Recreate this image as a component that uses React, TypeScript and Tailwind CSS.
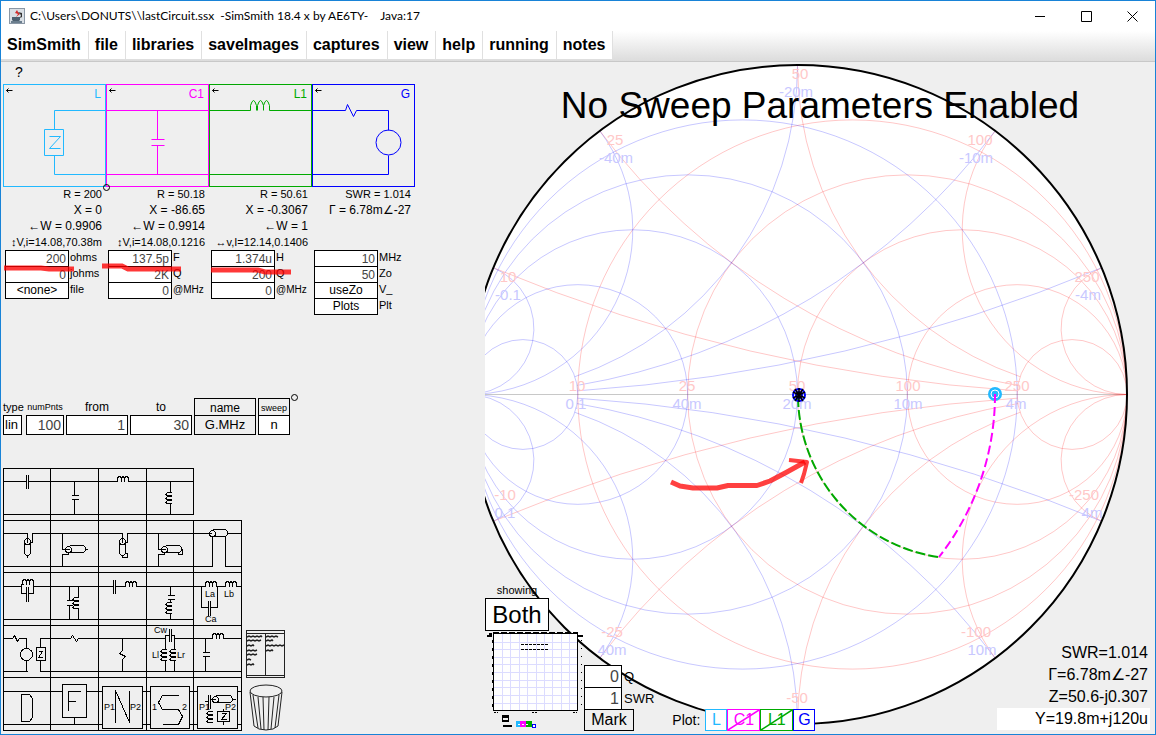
import { useState } from 'react';
import type { ReactNode } from 'react';

const MENUS = ['SimSmith', 'file', 'libraries', 'saveImages', 'captures', 'view', 'help', 'running', 'notes'];

type Field = { label: string; value: string; kind?: 'button' };

type Element = {
  name: string;
  color: string;
  stats: string[];
  fields: Field[];
  drawing: ReactNode;
};

const ELEMENTS: Element[] = [
  {
    name: 'L',
    color: 'text-[#22b9ff]',
    stats: ['R = 200', 'X = 0', '←W = 0.9906', '↕V,i=14.08,70.38m'],
    fields: [
      { label: 'ohms', value: '200' },
      { label: 'johms', value: '0' },
      { label: 'file', value: '<none>', kind: 'button' },
    ],
    drawing: <path d="M103 26H51V45M41 45H60V71H41ZM51 71V90H103M46 52H57L46 64H57" />,
  },
  {
    name: 'C1',
    color: 'text-[#ff00ff]',
    stats: ['R = 50.18', 'X = -86.65', '←W = 0.9914', '↕V,i=14.08,0.1216'],
    fields: [
      { label: 'F', value: '137.5p' },
      { label: 'Q', value: '2K' },
      { label: '@MHz', value: '0' },
    ],
    drawing: <path d="M0 26H103M51 26V55M45 55H58M45 61H58M51 61V90M0 90H103" />,
  },
  {
    name: 'L1',
    color: 'text-[#00aa00]',
    stats: ['R = 50.61', 'X = -0.3067', '←W = 1', '↔v,I=12.14,0.1406'],
    fields: [
      { label: 'H', value: '1.374u' },
      { label: 'Q', value: '200' },
      { label: '@MHz', value: '0' },
    ],
    drawing: (
      <path d="M0 26H41V21Q44 11 47 21V26M48 26V21Q51 11 54 21V26M54 21Q57 11 60 21V26H103M0 90H103" />
    ),
  },
  {
    name: 'G',
    color: 'text-[#0000ff]',
    stats: ['SWR = 1.014', 'Γ = 6.78m∠-27'],
    fields: [
      { label: 'MHz', value: '10' },
      { label: 'Zo', value: '50' },
      { label: 'V_', value: 'useZo', kind: 'button' },
      { label: 'Plt', value: 'Plots', kind: 'button' },
    ],
    drawing: (
      <>
        <path d="M0 26H33L35 20L41 32L44 26H76V46M76 71V90H0" />
        <circle cx="76" cy="58" r="12.5" />
      </>
    ),
  },
];

// Palette symbols, drawn from the top-left corner of each tile
const COIL = (x: number, y: number) =>
  `M${x} ${y}V${y - 3}L${x + 1} ${y - 5}H${x + 3}L${x + 4} ${y - 3}V${y}M${x + 4} ${y - 3}L${x + 5} ${y - 5}H${x + 6}L${x + 7} ${y - 3}V${y}M${x + 7} ${y - 3}L${x + 8} ${y - 5}H${x + 10}L${x + 11} ${y - 3}V${y}`;

const COIL_DOWN = (x: number, y: number) =>
  `M${x + 1} ${y}H${x - 3}L${x - 5} ${y + 2}L${x - 3} ${y + 3}H${x + 1}M${x + 1} ${y + 4}H${x - 3}L${x - 5} ${y + 6}L${x - 3} ${y + 7}H${x + 1}M${x + 1} ${y + 8}H${x - 3}L${x - 5} ${y + 10}L${x - 3} ${y + 11}H${x + 1}`;

type Tile = { title: string; d: string; texts?: [string, number, number][]; extra?: ReactNode };

const ROWS: { height: string; h: number; right: number; tiles: Tile[] }[] = [
  {
    height: 'h-[52px]',
    h: 52,
    right: 46,
    tiles: [
      { title: 'Series C', d: 'M0 13H23M25 13H47M23 6V20M25 6V20M0 46H48' },
      { title: 'Shunt C', d: 'M0 13H48M24 13V27M21 27H28M21 31H28M24 31V46M0 46H48' },
      { title: 'Series L', d: 'M0 13H19M30 13H48M0 46H48' + COIL(19, 13) },
      { title: 'Shunt L', d: 'M0 13H47M24 13V24M24 35V46M0 46H47' + COIL_DOWN(24, 24) },
    ],
  },
  {
    height: 'h-[52px]',
    h: 52,
    right: 52,
    tiles: [
      {
        title: 'Series open stub',
        d: 'M0 13H24V22M47 13H29V22H27M21 22V33L23 35H25L27 33V22M24 35V37M0 46H47',
        extra: <circle cx="24" cy="21" r="3" />,
      },
      {
        title: 'Shunt open stub',
        d: 'M0 13H48M12 13V29H19M19 25H33L35 27V30L33 32H19M35 29H37M18 32V34H12V46M0 46H48',
        extra: <circle cx="18" cy="29" r="3" />,
      },
      {
        title: 'Series shorted stub',
        d: 'M0 13H24V22M48 13H29V22H27M21 22V33L23 35H25L27 33V22M24 35V37H29V33H27M0 46H48',
        extra: <circle cx="24" cy="21" r="3" />,
      },
      {
        title: 'Shunt shorted stub',
        d: 'M0 13H47M12 13V29H19M19 25H33L35 27V30L33 32H19M35 29H36V34H32V32M18 32V34H12V46M0 46H47',
        extra: <circle cx="18" cy="29" r="3" />,
      },
      {
        title: 'Transmission line',
        d: 'M0 13H18M19 9H32L34 11V14L32 16H19M34 13H48M0 46H19V16M32 16V46H48',
        extra: <circle cx="19" cy="13" r="3" />,
      },
    ],
  },
  {
    height: 'h-[53px]',
    h: 53,
    right: 53,
    tiles: [
      {
        title: 'Parallel LC trap',
        d: 'M0 14H18M30 14H47M20 12H18V21H23M29 12H30V21H25M23 14V29M25 14V29M0 47H47' + COIL(19, 12),
      },
      {
        title: 'Shunt parallel LC',
        d: 'M0 14H48M19 14V28M16 28H22M16 33H22M19 33V47M28 14V25H26M28 35V47M0 47H48' + COIL_DOWN(27, 25),
      },
      { title: 'Series LC', d: 'M0 14H15M15 7V21M17 7V21M17 14H27M38 14H48M0 47H48' + COIL(27, 14) },
      {
        title: 'Shunt series LC',
        d: 'M0 14H47M24 14V23M21 23H28M21 27H28M24 27V30M24 41V47M0 47H47' + COIL_DOWN(24, 30),
      },
      {
        title: 'Tapped LC',
        d: 'M0 14H12M23 14H32M43 14H48M8 14V35H15M24 14V35H17M15 28V43M17 28V43' + COIL(12, 14) + COIL(32, 14),
        texts: [['La', 12, 25], ['Lb', 31, 25], ['Ca', 12, 50]],
      },
    ],
  },
  {
    height: 'h-[52px]',
    h: 52,
    right: 52,
    tiles: [
      {
        title: 'Generator and load',
        d: 'M0 13H9L11 10L14 16L16 13H23V23M23 35V46M0 46H24M47 13H37V22M33 22H42V35H33ZM37 35V46H47M35 26H39L35 32H39',
        extra: <circle cx="23" cy="29" r="6" />,
      },
      { title: 'Series R', d: 'M0 13H20L22 10L26 16L28 13H48M0 46H48' },
      { title: 'Shunt R', d: 'M0 13H48M24 13V25L21 28L27 31L24 34V46M0 46H48' },
      {
        title: 'Coupled coils',
        d:
          'M0 13H19M19 46V35M19 24V10H23M23 3V16M25 3V16M25 10H28V24M28 35V46M28 13H47M0 46H47' +
          COIL_DOWN(19, 24) +
          COIL_DOWN(28, 24),
        texts: [['Cw', 8, 8], ['Ll', 6, 33], ['Lr', 31, 33]],
      },
      { title: 'L network', d: 'M0 13H19M30 13H48M12 13V27M9 27H16M9 31H16M12 31V46M0 46H48' + COIL(19, 13) },
    ],
  },
  {
    height: 'h-[54px]',
    h: 53,
    right: 53,
    tiles: [
      { title: 'D block', d: 'M0 14H47M0 47H47M18 17H26L29 21V40L26 44H18ZM0 53H48' },
      { title: 'F block', d: 'M0 14H12M36 14H48M12 7H36V40H12ZM24 40V47M0 47H48M30 14H18V33M18 24H25M0 53H48' },
      {
        title: 'N block',
        d: 'M0 14H4M44 14H48M4 9H44V51H4ZM0 47H4M44 47H48M17 45V13L31 45V13M0 53H48',
        texts: [['P1', 6, 33], ['P2', 32, 33]],
      },
      {
        title: 'S block',
        d: 'M0 14H4M43 14H47M4 9H43V51H4ZM0 47H4M43 47H47M32 18H16L12 25L16 32H32L36 39L32 47H16M0 53H48',
        texts: [['1', 6, 33], ['2', 36, 33]],
      },
      {
        title: 'Circuit block',
        d:
          'M0 14H4M44 14H48M4 9H44V51H4ZM0 47H4M44 47H48M11 24H15M15 17V31M17 17V31M17 22H22M22 18H37L39 21V23L37 25H22M39 22H42M24 34H36V44H24ZM30 31V34M30 44V47M28 36H33L28 42H33M0 53H48' +
          COIL_DOWN(18, 34),
        texts: [['P1', 6, 33], ['P2', 32, 33]],
        extra: <circle cx="22" cy="22" r="3" />,
      },
    ],
  },
];

// Smith chart geometry, in chart units
const CX = 797.5;
const CY = 394.5;
const R = 329.5;
const STEPS = [0.2, 0.5, 1, 2, 5];

function toPoint(r: number, x: number) {
  const den = (r + 1) * (r + 1) + x * x;
  const re = (r * r - 1 + x * x) / den;
  const im = (2 * x) / den;
  return `${(CX + R * re).toFixed(2)} ${(CY - R * im).toFixed(2)}`;
}

function reactanceArc(x: number) {
  const end = Math.abs(x) <= 1 ? toPoint(5, x) : `${CX + R} ${CY}`;
  const radius = R / Math.abs(x);
  return `M${toPoint(0, x)}A${radius} ${radius} 0 0 ${x > 0 ? 0 : 1} ${end}`;
}

const RED_LABELS: [string, number, number][] = [
  ['50', 800, 79], ['25', 615, 145], ['10', 508, 282], ['100', 980, 145], ['250', 1087, 282],
  ['10', 577, 391], ['25', 687, 391], ['50', 797, 391], ['100', 908, 391], ['250', 1017, 391],
  ['-10', 505, 500], ['-25', 612, 637], ['-50', 797, 703], ['-100', 976, 637], ['-250', 1084, 500],
];

const BLUE_LABELS: [string, number, number][] = [
  ['-20m', 796, 97], ['-40m', 616, 163], ['-0.1', 508, 300], ['-10m', 976, 163], ['-4m', 1088, 300],
  ['0.1', 576, 409], ['40m', 687, 409], ['20m', 797, 409], ['10m', 908, 409], ['4m', 1016, 409],
  ['0.1', 505, 518], ['40m', 612, 655], ['10m', 982, 655], ['4m', 1092, 518],
];

function Grid() {
  return (
    <>
      {STEPS.map(r => (
        <circle key={r} cx={CX + (R * r) / (1 + r)} cy={CY} r={R / (1 + r)} />
      ))}
      {STEPS.map(x => (
        <path key={x} d={reactanceArc(x) + reactanceArc(-x)} />
      ))}
    </>
  );
}

function SmithChart() {
  return (
    <svg viewBox="485 62 670 672" className="block w-full" fill="none" aria-label="Smith chart">
      <circle cx={CX} cy={CY} r={R} fill="#fff" />
      <path d="M485 394.5H1127" stroke="#c8c8c8" />
      <g stroke="#ff0000" strokeOpacity="0.22">
        <Grid />
      </g>
      <g stroke="#0000ff" strokeOpacity="0.22" transform={`translate(${CX * 2} 0) scale(-1 1)`}>
        <Grid />
      </g>
      <g className="text-[15px]" textAnchor="middle">
        {RED_LABELS.map(([text, x, y]) => (
          <text key={`${x}-${y}`} x={x} y={y} fill="#ffc8c8">{text}</text>
        ))}
        {BLUE_LABELS.map(([text, x, y]) => (
          <text key={`${x}-${y}`} x={x} y={y} fill="#c8c8ff">{text}</text>
        ))}
      </g>
      <circle cx={CX} cy={CY} r={R} stroke="#000" strokeWidth="2" />

      {/* Impedance path: C1 then L1 */}
      <path d="M995 394A263.6 263.6 0 0 1 939 557" stroke="#ff00ff" strokeWidth="2" strokeDasharray="9 4" />
      <path d="M938 557A164.7 164.7 0 0 1 798 397" stroke="#00aa00" strokeWidth="2" strokeDasharray="10 3" />

      <circle cx="995" cy="394" r="7" fill="#22b9ff" />
      <circle cx="995" cy="394" r="4" stroke="#fff" />
      <path d="M995 394V401" stroke="#ff00ff" strokeWidth="2" />

      <circle cx="799" cy="395" r="6" stroke="#0000ff" strokeWidth="2" />
      <circle cx="799" cy="395" r="3" stroke="#0000ff" strokeWidth="2" />
      <path d="M799 388V402M793 392L805 398M805 392L793 398M795 389L803 401M803 389L795 401" stroke="#000" strokeWidth="1.5" />

      <g stroke="#ff0000" strokeOpacity="0.75" strokeLinejoin="round">
        <path d="M671 482L680 486L693 488H717L728 485.500H757L770 481L787 472L805 462" strokeWidth="5" />
        <path d="M789 460L807 462L804 474L801 483" strokeWidth="4" />
      </g>
    </svg>
  );
}

function CircuitColumn({ element }: { element: Element }) {
  return (
    <div className="flex w-[103px] flex-col">
      <svg viewBox="0 0 103 103" className={`block h-[103px] w-[103px] ${element.color}`} fill="none" stroke="currentColor">
        <g transform="translate(.5 .5)">
          <rect width="102" height="102" />
          {element.drawing}
          <path d="M3 6H9M3 6L5 4M3 6L5 8" stroke="#000" />
        </g>
        <text x="98" y="14" textAnchor="end" className="text-[12px]" fill="currentColor" stroke="none">
          {element.name}
        </text>
      </svg>
      <div className="h-[63px] pr-1 text-right whitespace-nowrap">
        {element.stats.map((line, i) => (
          <div
            key={line}
            className={i === 0 ? 'text-[11px] leading-[15px]' : i === 3 ? 'text-[11px] leading-4' : 'text-[12px] leading-4'}
          >
            {line}
          </div>
        ))}
      </div>
      <div className="flex flex-col pt-px pl-0.5">
        {element.fields.map(field => (
          <label key={field.label} className="-mt-px flex h-[17px] items-center">
            {field.kind === 'button' ? (
              <button className="h-[17px] w-16 border border-black bg-white text-center text-[12px] leading-[15px]">
                {field.value}
              </button>
            ) : (
              <input
                defaultValue={field.value}
                className="h-[17px] w-16 border border-black bg-white px-0.5 text-right text-[12px] text-[#444] outline-none"
              />
            )}
            <span className={`-mt-0.5 ml-px ${field.label.startsWith('@') ? 'text-[10px]' : 'text-[11px]'}`}>
              {field.label}
            </span>
          </label>
        ))}
      </div>
    </div>
  );
}

function SweepBar() {
  return (
    <div className="relative grid w-[287px] grid-cols-[21px_38px_62px_62px_62px_32px] grid-rows-[17px_20px] gap-x-0.5">
      <label htmlFor="type" className="text-[11px] leading-[18px]">type</label>
      <label htmlFor="points" className="text-center text-[9px] leading-[18px]">numPnts</label>
      <label htmlFor="from" className="text-center text-[12px] leading-[18px]">from</label>
      <label htmlFor="to" className="text-center text-[12px] leading-[18px]">to</label>
      <label htmlFor="name" className="border border-b-0 border-black text-center text-[12px] leading-[18px]">name</label>
      <label htmlFor="sweep" className="border border-b-0 border-black text-center text-[9px] leading-[18px]">sweep</label>
      <select id="type" className="h-5 w-[19px] appearance-none border border-black bg-white px-px text-[13px] leading-[18px]">
        <option>lin</option>
        <option>log</option>
      </select>
      <input id="points" defaultValue="100" className="h-5 min-w-0 border border-black bg-white px-0.5 text-right text-[14px] text-[#444]" />
      <input id="from" defaultValue="1" className="h-5 min-w-0 border border-black bg-white px-0.5 text-right text-[14px] text-[#444]" />
      <input id="to" defaultValue="30" className="h-5 min-w-0 border border-black bg-white px-0.5 text-right text-[14px] text-[#444]" />
      <button id="name" className="h-5 border border-black text-[13px] leading-[18px]">G.MHz</button>
      <button id="sweep" className="h-5 border border-black bg-white text-[13px] leading-[18px]">n</button>
      <span className="absolute -top-1 -right-2 h-[7px] w-[7px] rounded-full border border-black" />
    </div>
  );
}

function Palette() {
  return (
    <div className="flex items-end gap-[5px]">
      <div className="flex flex-col">
        {ROWS.map((row, i) => (
          <div key={i} className={`grid grid-cols-[47px_48px_48px_47px_48px] items-start ${row.height}`}>
            {row.tiles.map((tile, col) => (
              <button key={tile.title} title={tile.title} className="block">
                <svg
                  viewBox="0 0 48 52"
                  className="block h-[52px] w-[48px] overflow-visible"
                  fill="none"
                  stroke="#000"
                  shapeRendering="crispEdges"
                >
                  <g transform="translate(.5 .5)">
                    <path d={`M0 ${row.h}V0H${col % 3 === 0 ? 47 : 48}V${row.right}`} />
                    <path d={tile.d} />
                    {tile.extra}
                  </g>
                  {tile.texts?.map(([text, x, y]) => (
                    <text key={text} x={x} y={y} className="text-[9px]" fill="#000" stroke="none">{text}</text>
                  ))}
                </svg>
              </button>
            ))}
          </div>
        ))}
      </div>
      <div className="flex flex-col items-center gap-1.5">
        <button title="Library">
          <svg viewBox="0 0 40 48" className="block h-12 w-10" fill="none" stroke="#222">
            <path d="M.5 .5H38.500V47.500H.5ZM.5 3.500H38.500M.5 45.500H38.500M19.500 3.500V45.500" shapeRendering="crispEdges" />
            <path
              d="M1 7l2-1 2 1 2-1 2 1 2-1 2 1 2-1 1 1M1 11l2-1 2 1 2-1 2 1 2-1 2 1 2-1M1 16l2-1 2 1 2-1 1 1M1 21l2-1 2 1 2-1 2 1 2-1M1 25l2-1 2 1 2-1 2 1 2-1M1 30l2-1 2 1M1 35l2-1 2 1 2-1 1 1M20 7l2-1 2 1 2-1 2 1 2-1 2 1M20 11l2-1 2 1 2-1 1 1M20 16l2-1 2 1 2-1 2 1 2-1 2 1 2-1 2 1 2-1M20 21l2-1 2 1 2-1 1 1"
              strokeWidth="1.500"
            />
          </svg>
        </button>
        <button title="Trash">
          <svg viewBox="0 0 34 47" className="block h-[47px] w-[34px]" fill="none" stroke="#222">
            <ellipse cx="17" cy="7" rx="16" ry="6" />
            <path d="M1 8L5 42Q9 46 17 46Q25 46 29 42L33 8M4 11L9 44M9 13L12 45M14 13L15 46M20 13L19 46M25 13L22 45M30 11L26 44" />
          </svg>
        </button>
      </div>
    </div>
  );
}

function PlotThumbnail() {
  return (
    <svg viewBox="0 -1 99 100" className="block h-[100px] w-[99px]" fill="none" shapeRendering="crispEdges">
      <rect x="8.500" y="1.500" width="84" height="77" fill="#fff" stroke="#000" />
      <path
        d="M17 2V78M25 2V78M34 2V78M42 2V78M51 2V78M59 2V78M67 2V78M76 2V78M84 2V78M9 10H92M9 17H92M9 25H92M9 32H92M9 40H92M9 48H92M9 55H92M9 63H92M9 71H92"
        stroke="#dcdcff"
        strokeWidth="1"
      />
      <path d="M36 12.500H64M36 17.500H64" stroke="#000" strokeDasharray="3 1" />
      <path d="M8 1H93" stroke="#000" strokeWidth="2" strokeDasharray="6 2" />
      <path d="M2 3.500H7M4 1.500H7M93 3.500H98" stroke="#000" strokeWidth="2" />
      <path d="M7.500 8V78" stroke="#000" strokeDasharray="3 5" />
      <path d="M96.500 8V78" stroke="#000" strokeDasharray="1 7" />
      <path d="M9 80.500H13M47 80.500H53M88 80.500H92" stroke="#000" strokeDasharray="2 1" />
      <path d="M18 84.500H23M18 88.500H23M18 93.500H27" stroke="#000" strokeWidth="2" />
      <rect x="17.500" y="83.500" width="6" height="6" stroke="#000" />
      <rect x="31" y="89" width="4" height="6" fill="#22b9ff" />
      <rect x="35" y="89" width="6" height="6" fill="#ff00ff" />
      <rect x="41" y="89" width="6" height="6" fill="#00aa00" />
      <path d="M33 92.500H45" stroke="#fff" strokeDasharray="2 2" />
      <rect x="47.500" y="92.500" width="3" height="3" stroke="#0000ff" fill="#fff" />
    </svg>
  );
}

function PlotToggle({ name, className, on }: { name: string; className: string; on: boolean }) {
  const [shown, setShown] = useState(on);
  return (
    <button
      onClick={() => setShown(!shown)}
      className={`relative h-[22px] border bg-white text-[16px] leading-5 ${className}`}
    >
      {name}
      {!shown && (
        <svg viewBox="0 0 32 20" className="absolute inset-0 h-full w-full" preserveAspectRatio="none" stroke="currentColor">
          <path d="M0 20L32 0" strokeWidth="1.500" />
        </svg>
      )}
    </button>
  );
}

export default function App() {
  return (
    <div className="flex min-h-screen flex-col border border-[#1883d7] bg-[#efefef] font-['Liberation_Sans',Arial,sans-serif] text-black">
      {/* Title bar */}
      <div className="flex h-[30px] items-center bg-white pl-2">
        <svg viewBox="0 0 16 16" className="h-4 w-4">
          <rect width="16" height="16" fill="#8a97a5" />
          <rect x="1" y="1" width="14" height="14" fill="#d9dfe5" />
          <path d="M3 9H11V12L9 14H5L3 12Z" fill="#4d6070" />
          <path d="M2 13H13V15H2Z" fill="#6b7e8e" />
          <path d="M8 2L6 5L9 6L7 9L11 6L9 4Z" fill="#d42a2a" />
          <path d="M9 4L12 7L11 10L13 9V5Z" fill="#333" />
        </svg>
        <h1 className="ml-[5px] flex-1 font-['Lato',sans-serif] text-[12px] whitespace-pre">
          {'C:\\Users\\DONUTS\\\\lastCircuit.ssx  -SimSmith 18.4 x by AE6TY-    Java:17'}
        </h1>
        <div className="flex">
          <button aria-label="Minimize" className="flex h-[29px] w-[46px] items-center justify-center">
            <svg viewBox="0 0 11 11" className="h-[11px] w-[11px]" stroke="#000"><path d="M0 5.500H10" /></svg>
          </button>
          <button aria-label="Maximize" className="flex h-[29px] w-[46px] items-center justify-center">
            <svg viewBox="0 0 11 11" className="h-[11px] w-[11px]" stroke="#000" fill="none"><path d="M.5 .5H10.500V10.500H.5Z" /></svg>
          </button>
          <button aria-label="Close" className="flex h-[29px] w-[46px] items-center justify-center">
            <svg viewBox="0 0 11 11" className="h-[11px] w-[11px]" stroke="#000"><path d="M.5 .5L10.500 10.500M10.500 .5L.5 10.500" /></svg>
          </button>
        </div>
      </div>

      {/* Menu bar */}
      <nav className="flex h-[31px] items-start border-b border-[#c8c8c8] bg-linear-to-b from-white to-[#dcdcdc]">
        {MENUS.map(menu => (
          <button key={menu} className="h-7 border-r border-[#e0e0e0] bg-white pr-[7px] pl-1.5 text-[16px] leading-7 font-bold">
            {menu}
          </button>
        ))}
      </nav>

      <main className="flex flex-1">
        {/* Circuit editor */}
        <section className="relative w-[484px] shrink-0 pl-0.5">
          <div className="h-[22px] pl-3">
            <button className="block text-[14px] leading-5">?</button>
          </div>
          <div className="relative flex">
            {ELEMENTS.map(element => (
              <CircuitColumn key={element.name} element={element} />
            ))}
            <span className="absolute top-[100px] left-[100px] h-[7px] w-[7px] rounded-full border border-black" />
            <svg
              viewBox="0 0 412 231"
              className="pointer-events-none absolute top-0 left-0 h-[231px] w-[412px]"
              fill="none"
              stroke="#ff0000"
              strokeOpacity="0.78"
              strokeWidth="5"
            >
              <path d="M1 184H38L46 185H71M99 182H119L125 185H178M208 186H255L262 188H288" />
            </svg>
          </div>
          <div className="mt-[83px]">
            <SweepBar />
          </div>
          <div className="mt-[33px]">
            <Palette />
          </div>
        </section>

        {/* Chart */}
        <section className="relative min-w-0 flex-1">
          <SmithChart />
          <h2 className="absolute inset-x-0 top-[22px] text-center text-[37px] leading-[44px] whitespace-nowrap">
            No Sweep Parameters Enabled
          </h2>

          <div className="absolute bottom-[3px] left-0 flex items-end">
            <div className="w-[99px]">
              <div className="w-16 text-center text-[11px] leading-[15px]">showing</div>
              <button className="block h-[33px] w-16 border border-black bg-white text-[24px] leading-[31px]">Both</button>
              <PlotThumbnail />
            </div>
            <div className="flex flex-col items-start">
              <label className="flex items-center gap-0.5 text-[13px]">
                <input defaultValue="0" className="h-[23px] w-[38px] border border-black bg-white px-0.5 text-right text-[16px] text-[#444]" />
                Q
              </label>
              <label className="-mt-px flex items-center gap-0.5 text-[13px]">
                <input defaultValue="1" className="h-[23px] w-[38px] border border-black bg-white px-0.5 text-right text-[16px] text-[#444]" />
                SWR
              </label>
              <button className="-mt-px h-[22px] w-[50px] border border-black text-[16px] leading-5">Mark</button>
            </div>
            <div className="ml-[18px] flex items-center">
              <span className="mr-[5px] text-[14px]">Plot:</span>
              <PlotToggle name="L" on className="w-[22px] border-[#22b9ff] text-[#22b9ff]" />
              <PlotToggle name="C1" on={false} className="w-[33px] border-[#ff00ff] text-[#ff00ff]" />
              <PlotToggle name="L1" on={false} className="w-[33px] border-[#00aa00] text-[#00aa00]" />
              <PlotToggle name="G" on className="w-[22px] border-[#0000ff] text-[#0000ff]" />
            </div>
          </div>

          <div className="absolute right-[5px] bottom-1 w-[153px] text-right text-[16px] leading-[22px]">
            <div className="pr-0.5">SWR=1.014</div>
            <div className="pr-0.5">Γ=6.78m∠-27</div>
            <div className="pr-0.5">Z=50.6-j0.307</div>
            <div className="bg-white pr-0.5">Y=19.8m+j120u</div>
          </div>
        </section>
      </main>
    </div>
  );
}
